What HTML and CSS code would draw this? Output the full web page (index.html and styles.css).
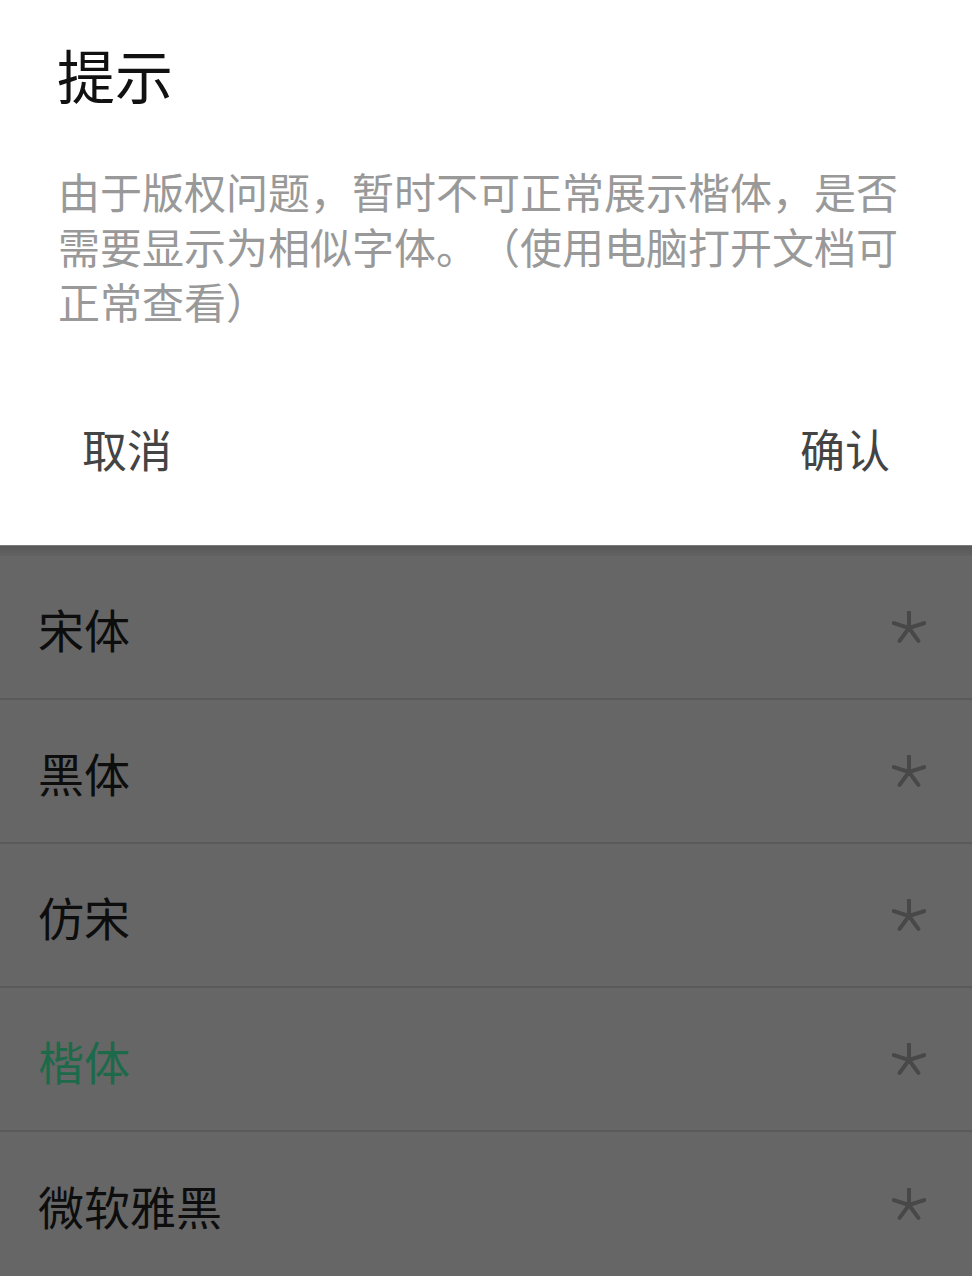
FILE: index.html
```html
<!DOCTYPE html>
<html lang="zh-CN">
<head>
  <meta charset="UTF-8" />
  <meta name="viewport" content="width=device-width, initial-scale=1.0" />
  <title>提示</title>
  <link rel="stylesheet" href="styles.css">
</head>
<body>

  <div class="dialog">
    <h2 class="dialog-title">提示</h2>
    <p class="dialog-text">由于版权问题，暂时不可正常展示楷体，是否需要显示为相似字体。（使用电脑打开文档可正常查看）</p>
    <div class="dialog-actions">
      <button class="action">取消</button>
      <button class="action">确认</button>
    </div>
  </div>

  <div class="shade"></div>

  <ul class="font-list">
    <li class="font-row"><span>宋体</span><svg class="star" viewBox="-17 -17 34 34"><path d="M0 0V-16M0 0L15.2 -4.9M0 0L9.4 12.9M0 0L-9.4 12.9M0 0L-15.2 -4.9"/></svg></li>
    <li class="font-row"><span>黑体</span><svg class="star" viewBox="-17 -17 34 34"><path d="M0 0V-16M0 0L15.2 -4.9M0 0L9.4 12.9M0 0L-9.4 12.9M0 0L-15.2 -4.9"/></svg></li>
    <li class="font-row"><span>仿宋</span><svg class="star" viewBox="-17 -17 34 34"><path d="M0 0V-16M0 0L15.2 -4.9M0 0L9.4 12.9M0 0L-9.4 12.9M0 0L-15.2 -4.9"/></svg></li>
    <li class="font-row active"><span>楷体</span><svg class="star" viewBox="-17 -17 34 34"><path d="M0 0V-16M0 0L15.2 -4.9M0 0L9.4 12.9M0 0L-9.4 12.9M0 0L-15.2 -4.9"/></svg></li>
    <li class="font-row"><span>微软雅黑</span><svg class="star" viewBox="-17 -17 34 34"><path d="M0 0V-16M0 0L15.2 -4.9M0 0L9.4 12.9M0 0L-9.4 12.9M0 0L-15.2 -4.9"/></svg></li>
  </ul>

</body>
</html>
```

FILE: styles.css
```css
body {
  margin: 0;
  font-family: "Noto Sans CJK SC", "Noto Sans", sans-serif;
  background: #666666;
  overflow: hidden;
  text-spacing-trim: space-all;
}

.dialog {
  background: #fff;
  height: 545px;
  padding-top: 42px;
  box-sizing: border-box;
}

.dialog-title {
  margin: 0;
  padding: 0 57px;
  font-size: 58px;
  line-height: 64px;
  font-weight: 400;
  color: #111;
}

.dialog-text {
  margin: 57px 0 0;
  padding: 0 58px;
  font-size: 42px;
  line-height: 55px;
  color: #999;
}

.dialog-actions {
  display: flex;
  justify-content: space-between;
  padding: 0 82px;
  margin-top: 89px;
}

.action {
  background: none;
  border: none;
  padding: 0;
  font-family: inherit;
  font-size: 45px;
  line-height: 64px;
  color: #444;
}

.shade {
  height: 11px;
  background: linear-gradient(#585858, #626262);
  border-top: 1px solid #7a7a7a;
  box-sizing: border-box;
}

.font-list {
  list-style: none;
  margin: 0;
  padding: 0;
}

.font-row {
  display: flex;
  align-items: center;
  justify-content: space-between;
  height: 144px;
  box-sizing: border-box;
  padding: 2px 46px 0 38px;
  border-bottom: 2px solid #5a5a5a;
  font-size: 46px;
  color: #0d0d0d;
}

.font-row:last-child {
  border-bottom: none;
}

.font-row.active {
  color: #1d6a4b;
}

.star {
  width: 34px;
  height: 34px;
  fill: none;
  stroke: #484848;
  stroke-width: 4;
  stroke-linecap: round;
}
```
